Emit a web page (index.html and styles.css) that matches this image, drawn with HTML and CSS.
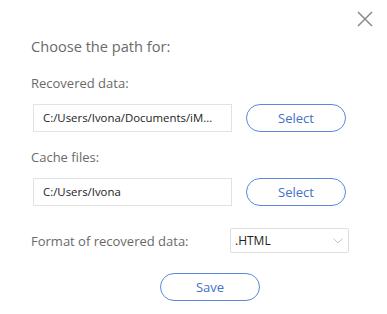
FILE: index.html
```html
<!DOCTYPE html>
<html>
<head>
  <title>Choose the path</title>
  <link rel="stylesheet" href="styles.css">
</head>
<body>
  <div class="dialog">
    <button class="close" type="button" aria-label="Close">
      <svg width="16" height="16" viewBox="0 0 16 16">
        <path d="M1 1 L15 15 M15 1 L1 15" stroke="#8a8a8a" stroke-width="1.5" fill="none"/>
      </svg>
    </button>

    <h2 class="title">Choose the path for:</h2>

    <div class="field">
      <label class="label">Recovered data:</label>
      <div class="path-row">
        <div class="path">C:/Users/Ivona/Documents/iM...</div>
        <button class="pill" type="button">Select</button>
      </div>
    </div>

    <div class="field">
      <label class="label">Cache files:</label>
      <div class="path-row">
        <div class="path">C:/Users/Ivona</div>
        <button class="pill" type="button">Select</button>
      </div>
    </div>

    <div class="format-row">
      <label class="label format-label">Format of recovered data:</label>
      <div class="select">
        <span>.HTML</span>
        <svg width="10" height="6" viewBox="0 0 10 6">
          <path d="M0.5 0.5 L5 5 L9.5 0.5" stroke="#c4c4c4" stroke-width="1" fill="none"/>
        </svg>
      </div>
    </div>

    <div class="actions">
      <button class="pill" type="button">Save</button>
    </div>
  </div>
</body>
</html>
```

FILE: styles.css
```css
body {
  margin: 0;
  padding: 0;
  background-color: #ffffff;
  font-family: "Open Sans", "Noto Sans", sans-serif;
}

.dialog {
  position: relative;
  width: 387px;
  height: 314px;
  box-sizing: border-box;
  padding: 35px 0 0 31px;
}

.close {
  position: absolute;
  top: 11px;
  right: 14px;
  padding: 0;
  border: none;
  background: none;
  cursor: pointer;
  line-height: 0;
}

.title {
  margin: 0;
  font-size: 14.6px;
  line-height: 22px;
  font-weight: normal;
  color: #6a6a6a;
}

.label {
  display: block;
  font-size: 13px;
  line-height: 18px;
  color: #6a6a6a;
}

.field {
  display: flex;
  flex-direction: column;
}

.field:first-of-type {
  margin-top: 17px;
}

.field .label {
  margin-bottom: 12px;
}

.field + .field {
  margin-top: 16px;
}

.path-row {
  display: flex;
  align-items: center;
  gap: 14px;
  padding-left: 2px;
}

.path {
  width: 199px;
  height: 28px;
  box-sizing: border-box;
  border: 1px solid #e2e2e2;
  padding: 0 9px;
  font-size: 11.4px;
  line-height: 26px;
  color: #222222;
  white-space: nowrap;
  overflow: hidden;
}

.pill {
  width: 100px;
  height: 28px;
  box-sizing: border-box;
  border: 1px solid #5b87dc;
  border-radius: 14px;
  background-color: #ffffff;
  color: #4570c8;
  font-family: inherit;
  font-size: 13px;
  padding: 0;
  cursor: pointer;
}

.format-row {
  display: flex;
  align-items: center;
  margin-top: 22px;
}

.format-label {
  width: 199px;
}

.select {
  width: 119px;
  height: 25px;
  box-sizing: border-box;
  border: 1px solid #dedede;
  border-radius: 2px;
  display: flex;
  align-items: center;
  justify-content: space-between;
  padding: 0 5px 0 4px;
  font-size: 12px;
  color: #222222;
}

.actions {
  margin-top: 20px;
  padding-left: 129px;
}
```
